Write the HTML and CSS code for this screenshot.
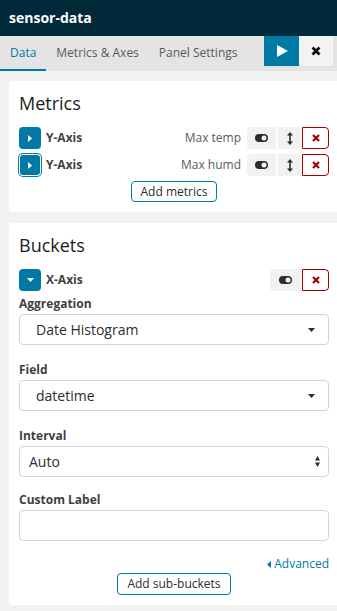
FILE: index.html
```html
<!DOCTYPE html>
<html lang="en">
<head>
    <meta charset="UTF-8">
    <meta name="viewport" content="width=device-width, initial-scale=1.0">
    <title>sensor-data</title>
    <link rel="stylesheet" href="styles.css">
</head>
<body>
    <div class="sidebar">
        <div class="title">sensor-data</div>

        <div class="tabs">
            <a class="tab active">Data</a>
            <a class="tab">Metrics &amp; Axes</a>
            <a class="tab">Panel Settings</a>
            <div class="tab-actions">
                <button class="btn-apply">
                    <svg width="11" height="12" viewBox="0 0 11 12"><path d="M0 0 L11 6 L0 12 Z" fill="#fff"/></svg>
                </button>
                <button class="btn-discard">
                    <svg width="10" height="10" viewBox="0 0 10 10"><path d="M1.5 1.5 L8.5 8.5 M8.5 1.5 L1.5 8.5" stroke="#111" stroke-width="2.8" stroke-linecap="butt"/></svg>
                </button>
            </div>
        </div>

        <div class="content">
            <section class="card">
                <h2>Metrics</h2>

                <div class="agg-row">
                    <button class="expand">
                        <svg width="4" height="7" viewBox="0 0 4 7"><path d="M0 0 L4 3.5 L0 7 Z" fill="#fff"/></svg>
                    </button>
                    <span class="agg-name">Y-Axis</span>
                    <span class="agg-desc">Max temp</span>
                    <div class="btn-group">
                        <button class="btn-light btn-toggle">
                            <svg width="13" height="8" viewBox="0 0 13 8"><rect width="13" height="8" rx="4" fill="#2d2d2d"/><circle cx="9" cy="4" r="2.5" fill="#f2f2f2"/></svg>
                        </button>
                        <button class="btn-light btn-sort">
                            <svg width="6" height="13" viewBox="0 0 6 13"><path d="M0 3.5 L3 0 L6 3.5 Z M0 9.5 L3 13 L6 9.5 Z" fill="#2d2d2d"/><rect x="2.2" y="3" width="1.6" height="7" fill="#2d2d2d"/></svg>
                        </button>
                        <button class="btn-remove">
                            <svg width="8" height="8" viewBox="0 0 8 8"><path d="M1 1 L7 7 M7 1 L1 7" stroke="#a30000" stroke-width="2.2"/></svg>
                        </button>
                    </div>
                </div>

                <div class="agg-row">
                    <button class="expand focused">
                        <svg width="4" height="7" viewBox="0 0 4 7"><path d="M0 0 L4 3.5 L0 7 Z" fill="#fff"/></svg>
                    </button>
                    <span class="agg-name">Y-Axis</span>
                    <span class="agg-desc">Max humd</span>
                    <div class="btn-group">
                        <button class="btn-light btn-toggle">
                            <svg width="13" height="8" viewBox="0 0 13 8"><rect width="13" height="8" rx="4" fill="#2d2d2d"/><circle cx="9" cy="4" r="2.5" fill="#f2f2f2"/></svg>
                        </button>
                        <button class="btn-light btn-sort">
                            <svg width="6" height="13" viewBox="0 0 6 13"><path d="M0 3.5 L3 0 L6 3.5 Z M0 9.5 L3 13 L6 9.5 Z" fill="#2d2d2d"/><rect x="2.2" y="3" width="1.6" height="7" fill="#2d2d2d"/></svg>
                        </button>
                        <button class="btn-remove">
                            <svg width="8" height="8" viewBox="0 0 8 8"><path d="M1 1 L7 7 M7 1 L1 7" stroke="#a30000" stroke-width="2.2"/></svg>
                        </button>
                    </div>
                </div>

                <div class="add-wrap">
                    <button class="btn-add">Add metrics</button>
                </div>
            </section>

            <section class="card">
                <h2>Buckets</h2>

                <div class="agg-row">
                    <button class="expand">
                        <svg width="7" height="4" viewBox="0 0 7 4"><path d="M0 0 L7 0 L3.5 4 Z" fill="#fff"/></svg>
                    </button>
                    <span class="agg-name">X-Axis</span>
                    <div class="btn-group push">
                        <button class="btn-light btn-toggle wide">
                            <svg width="13" height="8" viewBox="0 0 13 8"><rect width="13" height="8" rx="4" fill="#2d2d2d"/><circle cx="9" cy="4" r="2.5" fill="#f2f2f2"/></svg>
                        </button>
                        <button class="btn-remove">
                            <svg width="8" height="8" viewBox="0 0 8 8"><path d="M1 1 L7 7 M7 1 L1 7" stroke="#a30000" stroke-width="2.2"/></svg>
                        </button>
                    </div>
                </div>

                <div class="form-group">
                    <label>Aggregation</label>
                    <div class="select ui-select">
                        <span>Date Histogram</span>
                        <svg width="7" height="4" viewBox="0 0 7 4"><path d="M0 0 L7 0 L3.5 4 Z" fill="#2d2d2d"/></svg>
                    </div>
                </div>

                <div class="form-group">
                    <label>Field</label>
                    <div class="select ui-select">
                        <span>datetime</span>
                        <svg width="7" height="4" viewBox="0 0 7 4"><path d="M0 0 L7 0 L3.5 4 Z" fill="#2d2d2d"/></svg>
                    </div>
                </div>

                <div class="form-group">
                    <label>Interval</label>
                    <div class="select native">
                        <span>Auto</span>
                        <svg width="5" height="11" viewBox="0 0 5 11"><path d="M0 4.5 L2.5 0 L5 4.5 Z M0 6.5 L2.5 11 L5 6.5 Z" fill="#2d2d2d"/></svg>
                    </div>
                </div>

                <div class="form-group custom">
                    <label>Custom Label</label>
                    <div class="input"></div>
                </div>

                <div class="advanced">
                    <a>
                        <svg width="4" height="7" viewBox="0 0 4 7"><path d="M4 0 L0 3.5 L4 7 Z" fill="#0079a5"/></svg>
                        Advanced
                    </a>
                </div>

                <div class="add-wrap">
                    <button class="btn-add tall">Add sub-buckets</button>
                </div>
            </section>
        </div>
    </div>
</body>
</html>
```

FILE: styles.css
```css
* {
    margin: 0;
    padding: 0;
    box-sizing: border-box;
}

body {
    background-color: #f2f2f2;
    color: #2d2d2d;
    font-family: 'Open Sans', 'Liberation Sans', sans-serif;
    font-size: 12px;
    line-height: 18px;
    overflow: hidden;
}

button {
    font-family: inherit;
    border: none;
    cursor: pointer;
}

.title {
    height: 36px;
    background-color: #002a3a;
    color: #fff;
    font-weight: 700;
    font-size: 14px;
    line-height: 36px;
    padding-left: 9px;
}

.tabs {
    display: flex;
    align-items: flex-start;
    height: 35px;
    background-color: #e4e4e4;
}

.tab {
    padding: 8px 10px 7px;
    border-bottom: 2px solid transparent;
    color: #5a5a5a;
}

.tab.active {
    color: #0079a5;
    border-bottom-color: #0079a5;
}

.tab-actions {
    display: flex;
    margin-left: auto;
    margin-right: 4px;
}

.btn-apply,
.btn-discard {
    height: 30px;
    display: flex;
    align-items: center;
    justify-content: center;
}

.btn-apply {
    width: 35px;
    background-color: #0079a5;
    padding-left: 2px;
}

.btn-discard {
    width: 34px;
    background-color: #f3f3f3;
}

.content {
    padding: 10px 0 0 9px;
}

.card {
    background-color: #fff;
    border-radius: 4px 0 0 4px;
    padding: 10px 8px 10px 10px;
    margin-bottom: 11px;
}

.card h2 {
    font-size: 18px;
    font-weight: 400;
    line-height: 24px;
    color: #191e23;
    margin-bottom: 12px;
}

.agg-row {
    display: flex;
    align-items: center;
    height: 22px;
    margin-bottom: 5px;
}

.expand {
    width: 22px;
    height: 22px;
    border-radius: 4px;
    background-color: #0079a5;
    display: flex;
    align-items: center;
    justify-content: center;
    flex-shrink: 0;
}

.expand.focused {
    box-shadow: inset 0 0 0 1px #fff, 0 0 0 1px #0079a5;
}

.agg-name {
    font-weight: 700;
    color: #3f3f3f;
    margin-left: 5px;
}

.agg-desc {
    margin-left: auto;
    margin-right: 6px;
    color: #5a5a5a;
}

.btn-group {
    display: flex;
    height: 22px;
}

.btn-group.push {
    margin-left: auto;
}

.btn-light {
    background-color: #f2f2f2;
    height: 22px;
    display: flex;
    align-items: center;
    justify-content: center;
}

.btn-toggle {
    width: 29px;
    border-radius: 4px 0 0 4px;
    margin-right: 2px;
}

.btn-toggle.wide {
    width: 31px;
    margin-right: 1px;
}

.btn-sort {
    width: 23px;
    margin-right: 1px;
}

.btn-remove {
    width: 27px;
    height: 22px;
    background-color: #fff;
    border: 1px solid #a30000;
    border-radius: 0 4px 4px 0;
    display: flex;
    align-items: center;
    justify-content: center;
}

.add-wrap {
    display: flex;
    justify-content: center;
}

.card .agg-row + .add-wrap {
    margin-top: 1px;
}

.btn-add {
    height: 21px;
    padding: 0 9px;
    border: 1px solid #0079a5;
    border-radius: 4px;
    background-color: #fff;
    color: #2d2d2d;
    font-size: 12px;
    line-height: 19px;
}

.btn-add.tall {
    height: 22px;
    line-height: 20px;
}

.form-group {
    margin-bottom: 16px;
}

.agg-row + .form-group {
    margin-top: -1px;
}

.form-group.custom {
    margin-top: -2px;
}

.form-group label {
    display: block;
    font-weight: 700;
    color: #3f3f3f;
    margin-bottom: 1px;
}

.select,
.input {
    height: 31px;
    border: 1px solid #d4d4d4;
    border-radius: 4px;
    background-color: #fff;
}

.select {
    display: flex;
    align-items: center;
    justify-content: space-between;
    font-size: 14px;
    color: #2d2d2d;
}

.ui-select {
    padding: 0 13px 0 16px;
}

.native {
    padding: 0 8px 0 9px;
}

.advanced {
    display: flex;
    justify-content: flex-end;
    margin-top: -2px;
}

.advanced a {
    color: #0079a5;
    display: flex;
    align-items: center;
    gap: 3px;
}
```
